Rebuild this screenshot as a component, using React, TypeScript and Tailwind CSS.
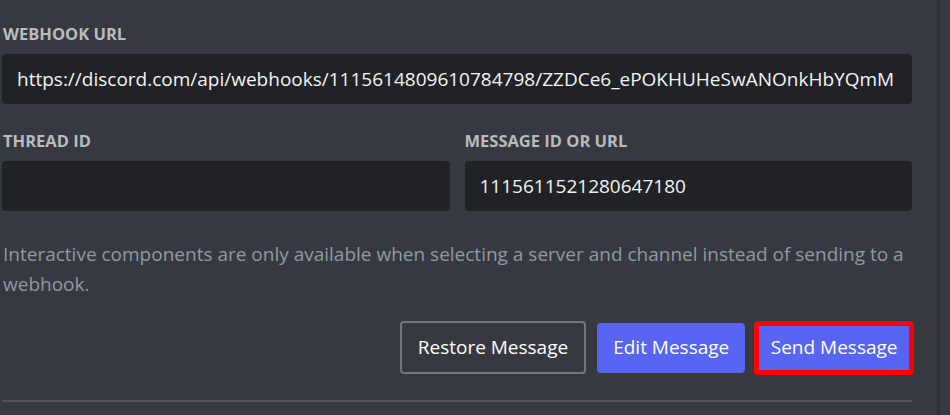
import React from "react";

const font = { fontFamily: '"Open Sans", "Noto Sans", sans-serif' };

export default function App() {
  return (
    <div
      className="w-[950px] h-[415px] bg-[#36393f] flex overflow-hidden"
      style={font}
    >
      <div className="w-[910px] ml-[2px] flex flex-col shrink-0">
        <div className="pt-[24px] pl-[1px] text-[16.5px] leading-[20px] font-bold text-[#b9bbbe]">
          WEBHOOK URL
        </div>
        <div className="mt-[10px] h-[50px] rounded-[4px] bg-[#202225] flex items-center px-[15px] text-[19px] text-[#f2f3f5] whitespace-nowrap overflow-hidden">
          https://discord.com/api/webhooks/1115614809610784798/ZZDCe6_ePOKHUHeSwANOnkHbYQmM
        </div>
        <div className="mt-[27px] grid grid-cols-2 gap-x-[15px]">
          <div className="flex flex-col">
            <div className="pl-[1px] text-[16.5px] leading-[20px] font-bold text-[#b9bbbe]">
              THREAD ID
            </div>
            <div className="mt-[10px] h-[50px] rounded-[4px] bg-[#202225]" />
          </div>
          <div className="flex flex-col">
            <div className="text-[16.5px] leading-[20px] font-bold text-[#b9bbbe]">
              MESSAGE ID OR URL
            </div>
            <div className="mt-[10px] h-[50px] rounded-[4px] bg-[#202225] flex items-center px-[15px] text-[19px] text-[#f2f3f5]">
              1115611521280647180
            </div>
          </div>
        </div>
        <p className="mt-[28px] pl-[1px] text-[19px] leading-[30px] text-[#8e9aa6]">
          Interactive components are only available when selecting a server and
          channel instead of sending to a webhook.
        </p>
        <div className="mt-[22px] flex justify-end items-center gap-[11px]">
          <button className="h-[53px] px-[16px] rounded-[4px] border-2 border-[#72767d] text-[19px] text-white">
            Restore Message
          </button>
          <button className="h-[50px] px-[16px] rounded-[4px] bg-[#5865f2] text-[19px] text-white">
            Edit Message
          </button>
          <div className="relative">
            <button className="h-[50px] px-[14.5px] rounded-[4px] bg-[#5865f2] text-[19px] text-white">
              Send Message
            </button>
            <div className="absolute -inset-[2px] border-[5px] border-[#ff0000] rounded-[4px] pointer-events-none" />
          </div>
        </div>
        <div className="mt-[26px] h-[2px] bg-[#4f545c]" />
      </div>
      <div className="ml-[25px] w-[3px] bg-[#2f3136] shrink-0" />
    </div>
  );
}
